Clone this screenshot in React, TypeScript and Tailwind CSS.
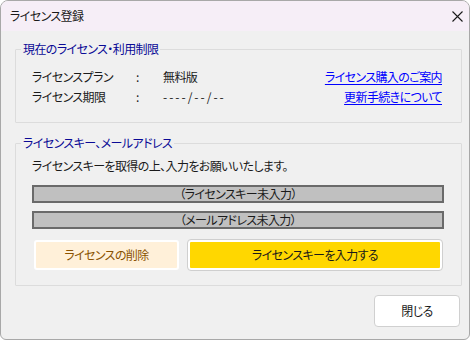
import React from 'react';

const font = {
  fontFamily: '"Noto Sans CJK JP", "Noto Sans", sans-serif',
  fontFeatureSettings: '"palt"',
};

const GroupBox = ({ title, children, className }: { title: string; children: React.ReactNode; className?: string }) => (
  <fieldset className="border border-[#dcdcdc] rounded-[1px] ml-[14px] w-[447px]">
    <legend className="ml-[5px] px-[2px] text-[12px] leading-[16px] text-[#0a0a96]">{title}</legend>
    <div className={className}>{children}</div>
  </fieldset>
);

const InfoRow = ({ label, value, link, valueClass }: { label: string; value: string; link: string; valueClass?: string }) => (
  <div className="flex items-center h-[20px] text-[12px] text-[#1a1a1a]">
    <span className="w-[104px]">{label}</span>
    <span className="w-[27px]">:</span>
    <span className={`flex-1 ${valueClass ?? ''}`}>{value}</span>
    <a href="#" className="text-[#0000ff] underline underline-offset-2">{link}</a>
  </div>
);

export default function App() {
  return (
    <div className="w-[474px] h-[341px] bg-white tracking-[-0.6px]" style={font}>
      <div className="w-[470px] h-[340px] bg-[#f0f0f0] border border-[#a8a8a8] rounded-t-[8px] rounded-b-[6px] overflow-hidden flex flex-col">
        {/* title bar */}
        <div className="h-[30px] bg-[#f6eef7] flex items-center justify-between pl-[9px] pr-[5px] shrink-0">
          <span className="text-[12px] text-[#1a1a1a]">ライセンス登録</span>
          <svg width="11" height="11" viewBox="0 0 11 11" className="mr-[1px]">
            <path d="M0.5 0.5 L10.5 10.5 M10.5 0.5 L0.5 10.5" stroke="#1a1a1a" strokeWidth="1.1" />
          </svg>
        </div>

        <div className="mt-[10px]">
          <GroupBox title="現在のライセンス・利用制限" className="pl-[16px] pr-[19px] pt-[10px] pb-[15px]">
            <InfoRow label="ライセンスプラン" value="無料版" link="ライセンス購入のご案内" />
            <InfoRow label="ライセンス期限" value="----/--/--" link="更新手続きについて" valueClass="tracking-[2px]" />
          </GroupBox>
        </div>

        <div className="mt-[12px]">
          <GroupBox title="ライセンスキー、メールアドレス" className="pl-[16px] pr-[17px] pt-[7px] pb-[15px]">
            <div className="text-[12px] leading-[16px] text-[#1a1a1a]">
              ライセンスキーを取得の上、入力をお願いいたします。
            </div>
            <div className="mt-[11px] h-[18px] bg-[#c0c0c0] border-2 border-[#6a6a6a] flex items-center justify-center text-[12px] text-[#1a1a1a]">
              （ライセンスキー未入力）
            </div>
            <div className="mt-[8px] h-[18px] bg-[#c0c0c0] border-2 border-[#6a6a6a] flex items-center justify-center text-[12px] text-[#1a1a1a]">
              （メールアドレス未入力）
            </div>
            <div className="mt-[11px] flex gap-[9px] pl-[2px] pr-[2px]">
              <button className="w-[145px] h-[30px] bg-[#fff0d9] border-2 border-white rounded-[3px] text-[12px] text-[#8a5200]">
                ライセンスの削除
              </button>
              <button className="flex-1 h-[30px] bg-[#ffd700] border-2 border-white outline outline-1 outline-[#cfcfcf] rounded-[3px] text-[12px] text-[#1a1a1a]">
                ライセンスキーを入力する
              </button>
            </div>
          </GroupBox>
        </div>

        <div className="flex justify-end pr-[9px] mt-[9px]">
          <button className="w-[86px] h-[32px] bg-white border border-[#d0d0d0] rounded-[4px] text-[12px] text-[#1a1a1a]">
            閉じる
          </button>
        </div>
      </div>
    </div>
  );
}
